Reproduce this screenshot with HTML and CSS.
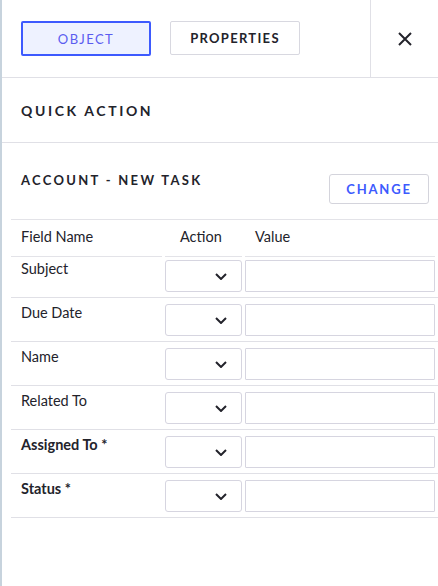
FILE: index.html
```html
<!DOCTYPE html>
<html lang="en">
  <head>
    <meta charset="UTF-8" />
    <meta name="viewport" content="width=device-width, initial-scale=1.0" />
    <title>Quick Action</title>
    <link rel="stylesheet" href="styles.css">
  </head>
  <body>
    <div class="panel">
      <header class="panel-header">
        <div class="tabs">
          <button class="tab active">OBJECT</button>
          <button class="tab">PROPERTIES</button>
        </div>
        <div class="close">
          <svg width="14" height="14" viewBox="0 0 14 14"><path d="M1 1L13 13M13 1L1 13" stroke="#23232b" stroke-width="2" fill="none"/></svg>
        </div>
      </header>

      <section class="section-title">QUICK ACTION</section>

      <section class="action">
        <div class="action-head">
          <h2>ACCOUNT - NEW TASK</h2>
          <button class="change">CHANGE</button>
        </div>

        <div class="fields">
          <div class="row head">
            <div class="cell name">Field Name</div>
            <div class="cell act">Action</div>
            <div class="cell val">Value</div>
          </div>
          <div class="row">
            <div class="name">Subject</div>
            <div class="select"><svg width="12" height="7" viewBox="0 0 12 7"><path d="M1 1L6 6L11 1" stroke="#23232b" stroke-width="2" fill="none"/></svg></div>
            <div class="input"></div>
          </div>
          <div class="row">
            <div class="name">Due Date</div>
            <div class="select"><svg width="12" height="7" viewBox="0 0 12 7"><path d="M1 1L6 6L11 1" stroke="#23232b" stroke-width="2" fill="none"/></svg></div>
            <div class="input"></div>
          </div>
          <div class="row">
            <div class="name">Name</div>
            <div class="select"><svg width="12" height="7" viewBox="0 0 12 7"><path d="M1 1L6 6L11 1" stroke="#23232b" stroke-width="2" fill="none"/></svg></div>
            <div class="input"></div>
          </div>
          <div class="row">
            <div class="name">Related To</div>
            <div class="select"><svg width="12" height="7" viewBox="0 0 12 7"><path d="M1 1L6 6L11 1" stroke="#23232b" stroke-width="2" fill="none"/></svg></div>
            <div class="input"></div>
          </div>
          <div class="row">
            <div class="name required">Assigned To *</div>
            <div class="select"><svg width="12" height="7" viewBox="0 0 12 7"><path d="M1 1L6 6L11 1" stroke="#23232b" stroke-width="2" fill="none"/></svg></div>
            <div class="input"></div>
          </div>
          <div class="row">
            <div class="name required">Status *</div>
            <div class="select"><svg width="12" height="7" viewBox="0 0 12 7"><path d="M1 1L6 6L11 1" stroke="#23232b" stroke-width="2" fill="none"/></svg></div>
            <div class="input"></div>
          </div>
        </div>
      </section>
    </div>
  </body>
</html>
```

FILE: styles.css
```css
body {
  font-family: 'Lato', 'Open Sans', sans-serif;
  margin: 0;
  padding: 0;
  background: #fff;
  color: #23232b;
}

.panel {
  min-height: 586px;
  border-left: 2px solid #c7d3dd;
  box-sizing: border-box;
}

.panel-header {
  display: flex;
  height: 77px;
  border-bottom: 1px solid #e0e0e6;
}

.tabs {
  flex: 1;
  display: flex;
  gap: 19px;
  padding: 21px 0 0 19px;
}

.tab {
  width: 130px;
  height: 34px;
  border: 1px solid #d8d8e0;
  border-radius: 2px;
  background: #fff;
  font-family: inherit;
  font-size: 13px;
  font-weight: 700;
  letter-spacing: 1.3px;
  color: #23232b;
  padding: 0;
}

.tab.active {
  height: 35px;
  border: 2px solid #3d5afe;
  background: #eef2ff;
  color: #5a5cf0;
  font-weight: 400;
  letter-spacing: 1.4px;
}

.close {
  width: 67px;
  border-left: 1px solid #e0e0e6;
  display: flex;
  align-items: center;
  justify-content: center;
}

.section-title {
  height: 64px;
  display: flex;
  align-items: center;
  padding-left: 19px;
  font-size: 14px;
  font-weight: 700;
  letter-spacing: 2.6px;
  border-bottom: 1px solid #e0e0e6;
}

.action-head {
  display: flex;
  justify-content: space-between;
  align-items: flex-start;
  padding: 29px 9px 0 19px;
}

.action-head h2 {
  margin: 0;
  font-size: 13px;
  font-weight: 700;
  letter-spacing: 2.3px;
  line-height: 16px;
}

.change {
  margin-top: 2px;
  width: 100px;
  height: 30px;
  border: 1px solid #d4d4dc;
  border-radius: 3px;
  background: #fff;
  font-family: inherit;
  font-size: 13px;
  font-weight: 700;
  letter-spacing: 1.8px;
  color: #3d5afe;
  padding: 0;
}

.fields {
  margin: 15px 0 0 9px;
  border-top: 1px solid #e3e3e8;
  font-size: 14.5px;
}

.row {
  display: grid;
  grid-template-columns: 151px 77px 190px;
  column-gap: 3px;
  padding: 6px 3px 5px 0;
  border-bottom: 1px solid #e0e0e6;
}

.row.head {
  padding: 0 3px 0 0;
  border-bottom: none;
}

.row.head .cell {
  padding-top: 8px;
  padding-bottom: 11px;
  line-height: 17px;
  border-bottom: 1px solid #e3e3e8;
}

.row.head + .row {
  padding-top: 3px;
}

.name {
  padding-left: 10px;
  line-height: 17px;
}

.cell.act {
  padding-left: 15px;
}

.cell.val {
  padding-left: 10px;
}

.required {
  font-weight: 700;
}

.select {
  height: 32px;
  border: 1px solid #d6d5e0;
  border-radius: 3px;
  box-sizing: border-box;
  display: flex;
  align-items: center;
  justify-content: flex-end;
  padding: 1px 14px 0 0;
}

.input {
  height: 32px;
  border: 1px solid #d6d5e0;
  border-radius: 1px;
  box-sizing: border-box;
}
```
